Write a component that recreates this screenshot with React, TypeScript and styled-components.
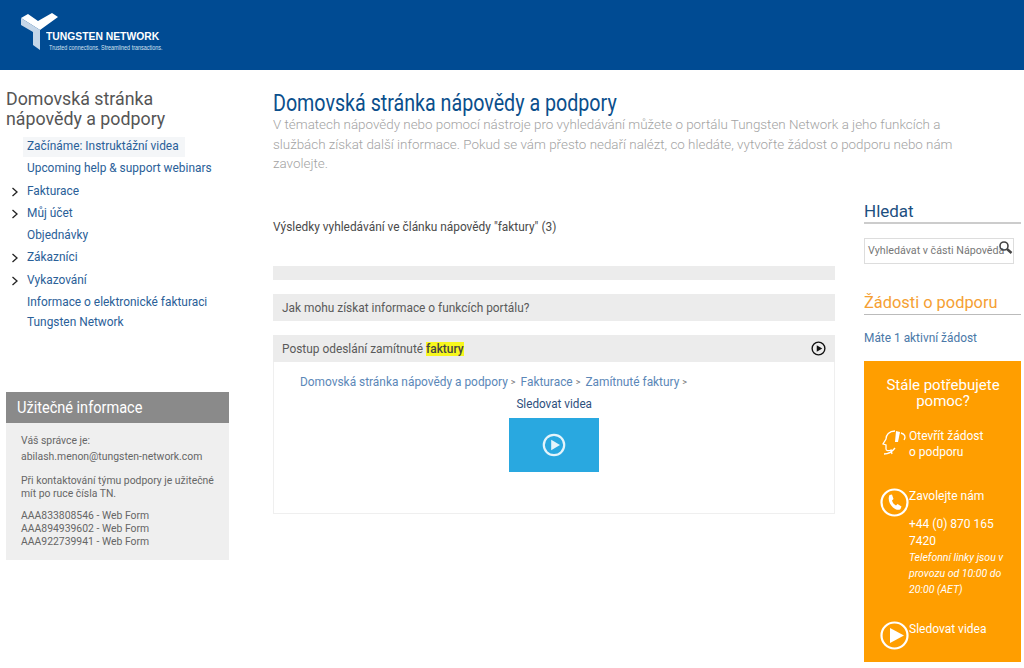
import styled, { createGlobalStyle } from "styled-components";

const GlobalStyle = createGlobalStyle`
  html, body {
    margin: 0;
    padding: 0;
    background: #fff;
    overflow: hidden;
  }
  body {
    font-family: Roboto, "Liberation Sans", Arial, sans-serif;
    font-size: 11.9px;
    color: #555;
  }
`;

const Header = styled.header`
  height: 70px;
  background: #004b93;
  display: flex;
  align-items: flex-start;
  padding: 13px 0 0 20px;
  box-sizing: border-box;
`;

const Logo = styled.div`
  display: flex;
  align-items: flex-start;
`;

const LogoText = styled.div`
  margin: 17px 0 0 -14px;
  color: #fff;
  display: flex;
  flex-direction: column;
`;

const LogoName = styled.span`
  font-family: "Liberation Sans", Arial, sans-serif;
  font-size: 11px;
  line-height: 13px;
  font-weight: 700;
  transform: scaleX(0.94);
  transform-origin: left;
  white-space: nowrap;
`;

const LogoTag = styled.span`
  font-family: "Liberation Sans", Arial, sans-serif;
  font-size: 7px;
  line-height: 9px;
  margin-left: 3px;
  color: #d5e2f0;
  transform: scaleX(0.78);
  transform-origin: left;
  white-space: nowrap;
`;

const Body = styled.div`
  display: flex;
  align-items: flex-start;
`;

const Sidebar = styled.aside`
  width: 223px;
  margin-left: 6px;
  flex: none;
  padding-top: 19px;
`;

const SideTitle = styled.h2`
  margin: 0 0 8px;
  font-size: 17.8px;
  line-height: 20px;
  font-weight: 400;
  color: #555;
`;

const NavList = styled.ul`
  list-style: none;
  margin: 0;
  padding: 0;
  height: 255px;
`;

const NavItem = styled.li`
  position: relative;
  padding-left: 21px;
  line-height: 19.6px;
  min-height: 19.6px;
  margin-bottom: 2.7px;
  color: #2a6098;
`;

const NavLabel = styled.span<{ $active?: boolean }>`
  display: inline-block;
  background: ${(p) => (p.$active ? "#f4f6f8" : "transparent")};
  padding: 0 6px 0 0;
  box-shadow: ${(p) => (p.$active ? "-4px 0 0 #f4f6f8" : "none")};
`;

const Chevron = styled.svg`
  position: absolute;
  left: 5px;
  top: 5px;
  width: 8px;
  height: 10px;
`;

const InfoBox = styled.section`
  background: #efefef;
  height: 168px;
`;

const InfoHead = styled.div`
  background: #8a8a8a;
  height: 31px;
  padding: 0 0 2px 11px;
  box-sizing: border-box;
  display: flex;
  align-items: center;
`;

const Condensed = styled.span`
  display: inline-block;
  transform: scaleX(0.855);
  transform-origin: left;
  white-space: nowrap;
`;

const InfoTitle = styled(Condensed)`
  color: #fff;
  font-size: 17px;
`;

const InfoBody = styled.div`
  padding: 10px 14px 0 15px;
  font-size: 10.4px;
  line-height: 13px;
  color: #666;
`;

const InfoPara = styled.p`
  margin: 0 0 9px;
`;

const Spaced = styled.div`
  line-height: 16px;
`;

const Content = styled.main`
  margin-left: 44px;
  flex: 1;
  min-width: 0;
  padding-top: 21px;
`;

const PageTitle = styled.h1`
  margin: 0;
  height: 24px;
  line-height: 26px;
  font-size: 23px;
  font-weight: 400;
  color: #0b4f8c;
`;

const Intro = styled.p`
  margin: 0;
  width: 690px;
  font-size: 13.4px;
  line-height: 19.5px;
  font-weight: 300;
  color: #a3a3a3;
`;

const Columns = styled.div`
  display: flex;
  align-items: flex-start;
`;

const Results = styled.div`
  width: 562px;
  margin-right: 29px;
  flex: none;
  padding-top: 45px;
`;

const ResultsTitle = styled.div`
  line-height: 16px;
  color: #4a4a4a;
  margin-bottom: 31px;
`;

const Bar = styled.div<{ $h?: number }>`
  background: #ececec;
  height: ${(p) => p.$h ?? 27}px;
  margin-bottom: 14px;
  padding: 1px 9px 0;
  box-sizing: border-box;
  display: flex;
  align-items: center;
  justify-content: space-between;
  color: #5a5a5a;
`;

const Expanded = styled.div`
  border: 1px solid #efefef;
  border-top: none;
  height: 152px;
  margin-top: -14px;
  padding: 12px 26px 0;
  box-sizing: border-box;
`;

const Mark = styled.mark`
  background: #f7f71e;
  color: #444;
  font-weight: 500;
`;

const Crumbs = styled.div`
  display: flex;
  line-height: 17px;
  color: #5b87b8;
`;

const CrumbSep = styled.span`
  margin: 0 5px 0 3px;
  font-size: 9px;
  color: #777;
`;

const VideoBlock = styled.div`
  display: flex;
  flex-direction: column;
  align-items: center;
  margin-top: 3px;
`;

const VideoLabel = styled(Condensed)`
  font-size: 13.7px;
  line-height: 18px;
  color: #2d4f7c;
  transform-origin: center;
`;

const VideoThumb = styled.div`
  width: 90px;
  height: 54px;
  margin-top: 6px;
  background: #29a8e0;
  display: flex;
  align-items: center;
  justify-content: center;
`;

const Rail = styled.aside`
  width: 157px;
  flex: none;
  padding-top: 27px;
`;

const RailTitle = styled.h3<{ $orange?: boolean }>`
  margin: 0;
  font-size: ${(p) => (p.$orange ? 16.4 : 17)}px;
  line-height: 21px;
  font-weight: 400;
  color: ${(p) => (p.$orange ? "#f5a033" : "#1d4f80")};
  border-bottom: ${(p) => (p.$orange ? "1px solid #bbb" : "2px solid #ccc")};
  padding-bottom: ${(p) => (p.$orange ? 1 : 0)}px;
`;

const SearchBox = styled.div`
  position: relative;
  width: 150px;
  height: 26px;
  margin: 14px 0 28px;
  border: 1px solid #ddd;
  box-sizing: border-box;
  overflow: hidden;
  display: flex;
  align-items: center;
  padding-left: 3px;
  font-size: 10.7px;
  color: #777;
  white-space: nowrap;
`;

const SearchIcon = styled.svg`
  position: absolute;
  right: 0;
  top: 1px;
  width: 15px;
  height: 15px;
`;

const RequestLink = styled.div`
  margin-top: 15px;
  line-height: 16px;
  color: #4a78a8;
`;

const HelpPanel = styled.div`
  margin-top: 15px;
  height: 301px;
  background: #ff9e00;
  color: #fff;
  padding: 16px 15px 0 16px;
  box-sizing: border-box;
`;

const HelpTitle = styled.div`
  font-size: 15px;
  line-height: 16.5px;
  text-align: center;
  margin-bottom: 18px;
`;

const HelpRow = styled.div<{ $mb?: number }>`
  display: flex;
  align-items: flex-start;
  margin-bottom: ${(p) => p.$mb ?? 0}px;
`;

const HelpIcon = styled.svg`
  flex: none;
  width: 29px;
  height: 29px;
`;

const HelpText = styled.div`
  font-size: 12px;
  line-height: 16.5px;
`;

const PhoneNumber = styled.div`
  font-size: 12px;
  line-height: 17px;
  margin-top: 12px;
`;

const Hours = styled.div`
  font-size: 10.5px;
  line-height: 16px;
  font-style: italic;
`;

const nav: { label: string; arrow?: boolean; active?: boolean }[] = [
  { label: "Začínáme: Instruktážní videa", active: true },
  { label: "Upcoming help & support webinars" },
  { label: "Fakturace", arrow: true },
  { label: "Můj účet", arrow: true },
  { label: "Objednávky" },
  { label: "Zákazníci", arrow: true },
  { label: "Vykazování", arrow: true },
  { label: "Informace o elektronické fakturaci Tungsten Network" },
];

function PlayCircle({ size, color }: { size: number; color: string }) {
  return (
    <svg width={size} height={size} viewBox="0 0 24 24">
      <circle cx="12" cy="12" r="10.2" fill="none" stroke={color} strokeWidth="2.2" />
      <path d="M9.2 6.8 L18 12 L9.2 17.2 Z" fill={color} />
    </svg>
  );
}

export default function App() {
  return (
    <>
      <GlobalStyle />
      <Header>
        <Logo>
          <svg width="40" height="38" viewBox="0 0 40 38">
            <path d="M1 5 L8 1 L18 8 L32 0 L38 4 L20 17 Z" fill="#fff" />
            <path d="M1 5 L20 17 L20 37 L13 32 L13 19 L1 12 Z" fill="#c5d6e8" />
          </svg>
          <LogoText>
            <LogoName>TUNGSTEN NETWORK</LogoName>
            <LogoTag>Trusted connections. Streamlined transactions.</LogoTag>
          </LogoText>
        </Logo>
      </Header>
      <Body>
        <Sidebar>
          <SideTitle>
            Domovská stránka
            <br />
            nápovědy a podpory
          </SideTitle>
          <NavList>
            {nav.map((item) => (
              <NavItem key={item.label}>
                {item.arrow && (
                  <Chevron viewBox="0 0 8 10">
                    <path d="M1.5 1 L6 5 L1.5 9" fill="none" stroke="#222" strokeWidth="1.3" />
                  </Chevron>
                )}
                <NavLabel $active={item.active}>{item.label}</NavLabel>
              </NavItem>
            ))}
          </NavList>
          <InfoBox>
            <InfoHead>
              <InfoTitle>Užitečné informace</InfoTitle>
            </InfoHead>
            <InfoBody>
              <InfoPara>
                <Spaced>Váš správce je:</Spaced>
                <Spaced>abilash.menon@tungsten-network.com</Spaced>
              </InfoPara>
              <InfoPara>Při kontaktování týmu podpory je užitečné mít po ruce čísla TN.</InfoPara>
              <InfoPara>
                AAA833808546 - Web Form
                <br />
                AAA894939602 - Web Form
                <br />
                AAA922739941 - Web Form
              </InfoPara>
            </InfoBody>
          </InfoBox>
        </Sidebar>
        <Content>
          <PageTitle>
            <Condensed>Domovská stránka nápovědy a podpory</Condensed>
          </PageTitle>
          <Intro>
            V tématech nápovědy nebo pomocí nástroje pro vyhledávání můžete o portálu Tungsten Network a jeho funkcích a
            službách získat další informace. Pokud se vám přesto nedaří nalézt, co hledáte, vytvořte žádost o podporu nebo
            nám zavolejte.
          </Intro>
          <Columns>
            <Results>
              <ResultsTitle>Výsledky vyhledávání ve článku nápovědy "faktury" (3)</ResultsTitle>
              <Bar $h={14} />
              <Bar>Jak mohu získat informace o funkcích portálu?</Bar>
              <Bar>
                <span>
                  Postup odeslání zamítnuté <Mark>faktury</Mark>
                </span>
                <PlayCircle size={15} color="#111" />
              </Bar>
              <Expanded>
                <Crumbs>
                  Domovská stránka nápovědy a podpory<CrumbSep>&gt;</CrumbSep>
                  Fakturace<CrumbSep>&gt;</CrumbSep>
                  Zamítnuté faktury<CrumbSep>&gt;</CrumbSep>
                </Crumbs>
                <VideoBlock>
                  <VideoLabel>Sledovat videa</VideoLabel>
                  <VideoThumb>
                    <PlayCircle size={24} color="#e4f4fb" />
                  </VideoThumb>
                </VideoBlock>
              </Expanded>
            </Results>
            <Rail>
              <RailTitle>Hledat</RailTitle>
              <SearchBox>
                Vyhledávat v části Nápověda
                <SearchIcon viewBox="0 0 15 15">
                  <circle cx="6" cy="6" r="4" fill="none" stroke="#444" strokeWidth="1.6" />
                  <path d="M9 9 L13.5 13" stroke="#444" strokeWidth="2.4" />
                </SearchIcon>
              </SearchBox>
              <RailTitle $orange>Žádosti o podporu</RailTitle>
              <RequestLink>Máte 1 aktivní žádost</RequestLink>
              <HelpPanel>
                <HelpTitle>
                  Stále potřebujete
                  <br />
                  pomoc?
                </HelpTitle>
                <HelpRow $mb={27}>
                  <HelpIcon viewBox="0 0 29 29">
                    <path
                      d="M15 3 C9 3 6 7 6 11 L3 16 L6 17 L6 21 C6 23 9 23 11 22 L12 26 M4 26 C8 26 12 24 15 20"
                      fill="none"
                      stroke="#fff"
                      strokeWidth="1.3"
                    />
                    <path d="M16 3 L20 4 L18 14 L15 14 Z" fill="#fff" />
                    <path d="M21 5 C25 6 26 9 24 12" fill="none" stroke="#fff" strokeWidth="1.3" />
                  </HelpIcon>
                  <HelpText>
                    Otevřít žádost
                    <br />o podporu
                  </HelpText>
                </HelpRow>
                <HelpRow $mb={23}>
                  <HelpIcon viewBox="0 0 29 29">
                    <circle cx="14.5" cy="14.5" r="13" fill="none" stroke="#fff" strokeWidth="2.2" />
                    <path
                      d="M9.5 7 L12 6.5 L13.5 11 L12 12.5 C12.5 14.5 14 16.5 16 17.5 L17.5 16 L21.5 18.5 L20.5 21 C19 22.5 16 22 13 19.5 C9.5 16.5 7.5 11 9.5 7 Z"
                      fill="#fff"
                    />
                  </HelpIcon>
                  <div>
                    <HelpText>Zavolejte nám</HelpText>
                    <PhoneNumber>+44 (0) 870 165 7420</PhoneNumber>
                    <Hours>Telefonní linky jsou v provozu od 10:00 do 20:00 (AET)</Hours>
                  </div>
                </HelpRow>
                <HelpRow>
                  <HelpIcon viewBox="0 0 29 29">
                    <circle cx="14.5" cy="14.5" r="13" fill="none" stroke="#fff" strokeWidth="2.2" />
                    <path d="M10 7 L24 14.5 L10 22 Z" fill="#fff" />
                  </HelpIcon>
                  <HelpText>Sledovat videa</HelpText>
                </HelpRow>
              </HelpPanel>
            </Rail>
          </Columns>
        </Content>
      </Body>
    </>
  );
}
